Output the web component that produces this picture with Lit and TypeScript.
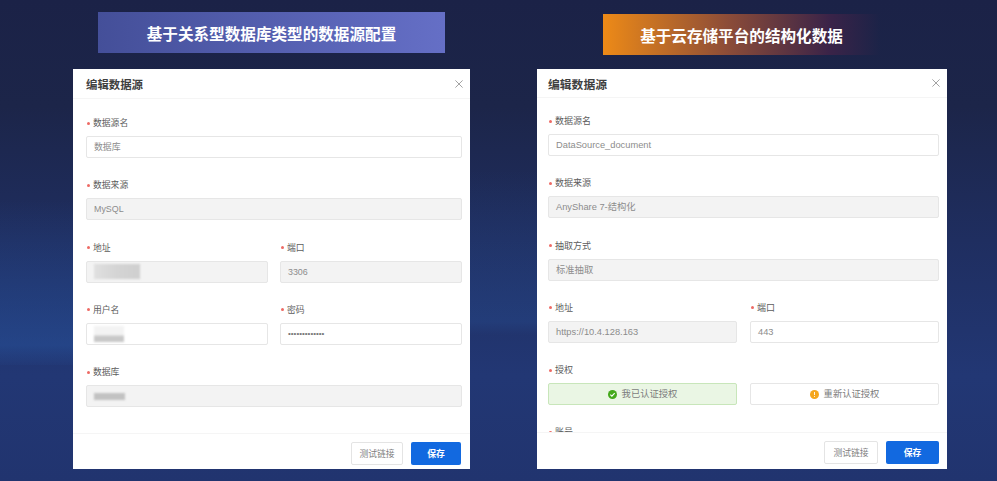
import { LitElement, html, css } from "lit";
import { customElement, property } from "lit/decorators.js";

type Field = {
  label: string;
  value?: string;
  disabled?: boolean;
  blur?: "a" | "b" | "c";
  kind?: "ok" | "warn";
};

const F = (label: string, value = "", disabled = false, blur?: Field["blur"]): Field => ({ label, value, disabled, blur });

@customElement("edit-card")
class EditCard extends LitElement {
  @property({ type: Array }) rows: Field[][] = [];
  @property() variant = "left";

  static styles = css`
    :host { display: block; flex: none; }
    .card { height: 400px; background: #fff; display: flex; flex-direction: column; color: #444; }
    .left { width: 397px; --px: 13px; --top: 17px; --head: 30px; --foot: 36px; --title: 11.4px; --fs: 8.9px; --lab: 8.8px; --cg: 12px; --foot-r: 9px; }
    .right { width: 410px; --px: 11px; --top: 16px; --head: 29px; --foot: 37px; --title: 11.8px; --fs: 9.3px; --lab: 9px; --cg: 13px; --foot-r: 8px; }
    .head { height: var(--head); flex: none; display: flex; align-items: center; justify-content: space-between; border-bottom: 1px solid #f5f5f5; padding: 0 7px 0 var(--px); box-sizing: border-box; }
    .title { font-size: var(--title); font-weight: 700; color: #3f3f3f; }
    .close { width: 8px; height: 8px; display: block; }
    .body { flex: 1; min-height: 0; overflow: hidden; padding: var(--top) 8px 0 var(--px); display: flex; flex-direction: column; gap: 20.25px; }
    .row { display: grid; grid-template-columns: 1fr; column-gap: var(--cg); flex: none; }
    .row.two { grid-template-columns: 1fr 1fr; }
    .label { height: 14px; font-size: var(--lab); line-height: 14px; color: #5c5c5c; margin-bottom: 6px; display: flex; align-items: center; }
    .star { width: 3px; height: 3px; border-radius: 50%; background: #ee6a64; margin: 0 3px 0 1px; flex: none; }
    .input { height: 22px; box-sizing: border-box; border: 1px solid #e6e6e6; border-radius: 2px; background: #fff; padding: 0 7px; font-size: var(--fs); line-height: 20px; color: #8c8c8c; display: flex; align-items: center; white-space: nowrap; overflow: hidden; }
    .input.disabled { background: #f3f3f3; }
    .pw { color: #777; font-size: 8px; }
    .smear { display: block; filter: blur(1.3px); flex: none; }
    .a { width: 46px; height: 15px; background: linear-gradient(90deg, #e0e0e0, #d4d4d4 50%, #cfcfcf); }
    .b { width: 30px; height: 16px; margin-top: 1px; background: linear-gradient(180deg, #f3f3f3 0 55%, #c8c8c8 65%); }
    .c { width: 31px; height: 7px; background: #c2c2c2; }
    .ok { background: #eaf6e4; border-color: #c8e6ba; justify-content: center; color: #7d7d7d; gap: 5px; }
    .warn { justify-content: center; color: #7d7d7d; gap: 5px; }
    .ic { width: 9px; height: 9px; display: block; flex: none; }
    .foot { height: var(--foot); flex: none; border-top: 1px solid #f5f5f5; display: flex; justify-content: flex-end; align-items: flex-start; gap: 8px; padding: 8px var(--foot-r) 0 0; box-sizing: border-box; }
    .btn { height: 23px; box-sizing: border-box; border-radius: 2px; font-size: 8.8px; display: flex; align-items: center; justify-content: center; }
    .test { width: 52px; border: 1px solid #e4e4e4; color: #808080; background: #fff; }
    .save { width: 50px; background: #1269e0; color: #fff; font-weight: 700; }
    .right .test { width: 54px; }
    .right .save { width: 53px; }
  `;

  field(f: Field) {
    let inner: unknown = f.value;
    let cls = f.disabled ? "input disabled" : "input";
    if (f.blur) inner = html`<span class="smear ${f.blur}"></span>`;
    if (f.value && /^•+$/.test(f.value)) inner = html`<span class="pw">${f.value}</span>`;
    if (f.kind === "ok") {
      cls = "input ok";
      inner = html`<svg class="ic" viewBox="0 0 10 10"><circle cx="5" cy="5" r="5" fill="#45a91c"/><path d="M2.6 5.1l1.7 1.7 3.1-3.3" fill="none" stroke="#fff" stroke-width="1.2"/></svg>${f.value}`;
    }
    if (f.kind === "warn") {
      cls = "input warn";
      inner = html`<svg class="ic" viewBox="0 0 10 10"><circle cx="5" cy="5" r="5" fill="#f5a61d"/><path d="M5 2.2v3.4M5 6.8v1" stroke="#fff" stroke-width="1"/></svg>${f.value}`;
    }
    return html`<div>
      <div class="label">${f.label ? html`<span class="star"></span>${f.label}` : ""}</div>
      <div class=${cls}>${inner}</div>
    </div>`;
  }

  render() {
    return html`<div class="card ${this.variant}">
      <div class="head">
        <span class="title">编辑数据源</span>
        <svg class="close" viewBox="0 0 8 8"><path d="M.4.4l7.200 7.200M7.600.4l-7.200 7.200" stroke="#8c8c8c" stroke-width=".8" fill="none"/></svg>
      </div>
      <div class="body">
        ${this.rows.map((r) => html`<div class="row ${r.length > 1 ? "two" : ""}">${r.map((f) => this.field(f))}</div>`)}
      </div>
      <div class="foot">
        <div class="btn test">测试链接</div>
        <div class="btn save">保存</div>
      </div>
    </div>`;
  }
}

@customElement("app-root")
export class AppRoot extends LitElement {
  static styles = css`
    :host { display: block; width: 997px; height: 481px; overflow: hidden; font-family: "Liberation Sans", "Noto Sans CJK SC", sans-serif;
      background:
        linear-gradient(180deg, rgba(38,78,150,0) 0, rgba(38,78,150,.6) 88%, rgba(38,78,150,.1) 100%) 0 200px / 75px 165px no-repeat,
        linear-gradient(180deg, rgba(38,74,140,0) 0, rgba(38,74,140,.4) 92%, rgba(38,74,140,0) 100%) 470px 170px / 67px 165px no-repeat,
        linear-gradient(180deg, #1b2247 0%, #1c2549 22%, #1f2e60 50%, #223774 78%, #21346f 100%);
    }
    .wrap { display: flex; padding-top: 12px; padding-left: 73px; gap: 67px; }
    .col { display: flex; flex-direction: column; }
    .banner { height: 41px; display: flex; align-items: center; justify-content: center; color: #fff; font-weight: 700; font-size: 15.6px; white-space: nowrap; font-family: "Noto Sans CJK SC", sans-serif; }
    .b1 { width: 347px; margin: 0 0 16px 25px; background: linear-gradient(90deg, #444f99, #656fc6); }
    .b2 { width: 277px; margin: 2px 0 14px 66px; background: linear-gradient(90deg, #ed8a17 0%, #8c4c38 45%, #3a2348 82%, rgba(27,34,71,0) 100%); }
  `;

  left: Field[][] = [
    [F("数据源名", "数据库")],
    [F("数据来源", "MySQL", true)],
    [F("地址", "", true, "a"), F("端口", "3306", true)],
    [F("用户名", "", false, "b"), F("密码", "•••••••••••••")],
    [F("数据库", "", true, "c")],
  ];

  right: Field[][] = [
    [F("数据源名", "DataSource_document")],
    [F("数据来源", "AnyShare 7-结构化", true)],
    [F("抽取方式", "标准抽取", true)],
    [F("地址", "https://10.4.128.163", true), F("端口", "443")],
    [
      { label: "授权", value: "我已认证授权", kind: "ok" },
      { label: "", value: "重新认证授权", kind: "warn" },
    ],
    [F("账号", "")],
  ];

  render() {
    return html`<div class="wrap">
      <div class="col">
        <div class="banner b1">基于关系型数据库类型的数据源配置</div>
        <edit-card .rows=${this.left} variant="left"></edit-card>
      </div>
      <div class="col">
        <div class="banner b2">基于云存储平台的结构化数据</div>
        <edit-card .rows=${this.right} variant="right"></edit-card>
      </div>
    </div>`;
  }
}
